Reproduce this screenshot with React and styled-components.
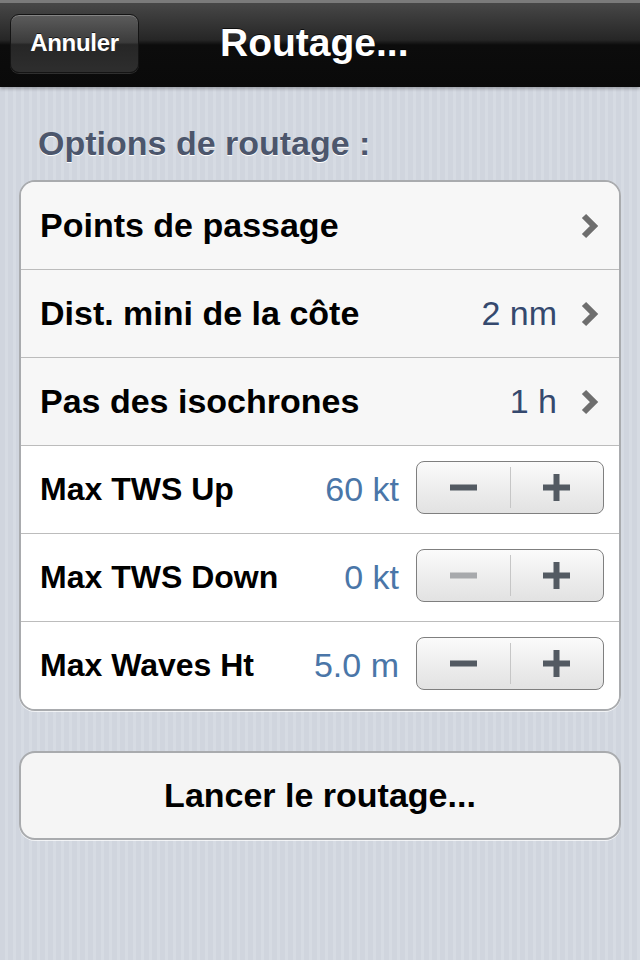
import React from 'react'
import styled, { createGlobalStyle } from 'styled-components'

const GlobalStyle = createGlobalStyle`
  html, body {
    margin: 0;
    padding: 0;
  }
  body {
    font-family: "Liberation Sans", Arial, sans-serif;
    background-color: #d3d8e1;
  }
`

const Screen = styled.div`
  width: 640px;
  height: 960px;
  display: flex;
  flex-direction: column;
  background-color: #d0d5de;
  background-image: repeating-linear-gradient(
    90deg,
    #d0d5de 0px,
    #d0d5de 5px,
    #d6dbe3 5px,
    #d6dbe3 8px
  );
  overflow: hidden;
`

const NavBar = styled.div`
  height: 87px;
  box-sizing: border-box;
  display: flex;
  align-items: center;
  padding: 0 10px;
  gap: 81px;
  border-top: 3px solid #7a7a7a;
  background: linear-gradient(
    to bottom,
    #474747 0%,
    #262626 44%,
    #0c0c0c 50%,
    #0a0a0a 100%
  );
  box-shadow: 0 2px 3px rgba(0, 0, 0, 0.25);
`

const NavButton = styled.button`
  width: 129px;
  height: 59px;
  margin-top: -4px;
  border-radius: 9px;
  border: 1px solid #141414;
  background: linear-gradient(
    to bottom,
    #5c5c5c 0%,
    #3b3b3b 48%,
    #262626 52%,
    #2e2e2e 100%
  );
  box-shadow: inset 0 1px 0 rgba(255, 255, 255, 0.25), 0 1px 0 rgba(255, 255, 255, 0.15);
  color: #fff;
  font-family: "Liberation Sans", Arial, sans-serif;
  font-weight: bold;
  font-size: 24px;
  letter-spacing: -0.3px;
  text-shadow: 0 -1px 0 rgba(0, 0, 0, 0.6);
  cursor: pointer;
`

const NavTitle = styled.h1`
  margin: -4px 0 0;
  color: #fff;
  font-size: 39px;
  font-weight: bold;
  text-shadow: 0 -1px 0 rgba(0, 0, 0, 0.7);
`

const Content = styled.div`
  display: flex;
  flex-direction: column;
  padding: 37px 19px 0;
`

const SectionTitle = styled.h2`
  margin: 0 0 17px 19px;
  font-size: 34px;
  line-height: 39px;
  font-weight: bold;
  color: #4c566c;
  text-shadow: 0 1px 0 #fff;
`

const Group = styled.div`
  display: flex;
  flex-direction: column;
  border: 2px solid #a9abae;
  border-radius: 16px;
  background: #f7f7f7;
  overflow: hidden;
  box-shadow: 0 1px 0 rgba(255, 255, 255, 0.7);
`

const Row = styled.div`
  height: 87px;
  display: flex;
  align-items: center;
  padding: 0 15px 0 19px;
  border-top: ${p => (p.first ? 'none' : '1px solid #bcbcbc')};
  background: ${p => (p.white ? '#ffffff' : '#f7f7f7')};
`

const Label = styled.span`
  flex: 1;
  font-size: ${p => (p.small ? '32px' : '34px')};
  font-weight: bold;
  color: #000;
`

const Value = styled.span`
  font-size: 34px;
  color: ${p => (p.accent ? '#4a76a8' : '#35496e')};
  margin-right: ${p => (p.accent ? '17px' : '24px')};
`

const Chevron = styled.svg`
  width: 18px;
  height: 26px;
  margin-right: 5px;
`

const Stepper = styled.div`
  width: 186px;
  height: 51px;
  margin-bottom: 5px;
  display: flex;
  align-items: stretch;
  border: 1px solid #7f7f7f;
  border-radius: 8px;
  background: linear-gradient(to bottom, #fbfbfb 0%, #eeeeee 50%, #e2e2e2 100%);
  overflow: hidden;
`

const StepButton = styled.button`
  flex: 1;
  display: flex;
  align-items: center;
  justify-content: center;
  border: none;
  border-left: ${p => (p.divider ? '1px solid #c6c6c6' : 'none')};
  margin: ${p => (p.divider ? '5px 0' : '0')};
  background: transparent;
  padding: 0;
  cursor: pointer;
`

const StepIcon = styled.svg`
  width: 27px;
  height: 27px;
`

const ActionButton = styled.button`
  margin-top: 40px;
  height: 89px;
  border: 2px solid #a9abae;
  border-radius: 16px;
  background: #f5f5f5;
  font-family: "Liberation Sans", Arial, sans-serif;
  font-size: 34px;
  font-weight: bold;
  color: #000;
  box-shadow: 0 1px 0 rgba(255, 255, 255, 0.7);
  cursor: pointer;
`

const ChevronIcon = () => (
  <Chevron viewBox="0 0 18 26">
    <path d="M3 3 L13 13 L3 23" fill="none" stroke="#6e6e6e" strokeWidth="6" strokeLinejoin="miter" />
  </Chevron>
)

const Minus = ({ disabled }) => (
  <StepIcon viewBox="0 0 27 27">
    <rect x="0" y="10.5" width="27" height="6" fill={disabled ? '#a7a9ac' : '#535a62'} />
  </StepIcon>
)

const Plus = () => (
  <StepIcon viewBox="0 0 27 27">
    <rect x="0" y="10.5" width="27" height="6" fill="#535a62" />
    <rect x="10.5" y="0" width="6" height="27" fill="#535a62" />
  </StepIcon>
)

const navRows = [
  { label: 'Points de passage', value: '' },
  { label: 'Dist. mini de la côte', value: '2 nm' },
  { label: 'Pas des isochrones', value: '1 h' },
]

const stepRows = [
  { label: 'Max TWS Up', value: '60 kt', minDisabled: false },
  { label: 'Max TWS Down', value: '0 kt', minDisabled: true },
  { label: 'Max Waves Ht', value: '5.0 m', minDisabled: false },
]

const App = () => {
  return (
    <>
      <GlobalStyle />
      <Screen>
        <NavBar>
          <NavButton>Annuler</NavButton>
          <NavTitle>Routage...</NavTitle>
        </NavBar>
        <Content>
          <SectionTitle>Options de routage :</SectionTitle>
          <Group>
            {navRows.map((row, i) => (
              <Row key={row.label} first={i === 0}>
                <Label>{row.label}</Label>
                {row.value && <Value>{row.value}</Value>}
                <ChevronIcon />
              </Row>
            ))}
            {stepRows.map(row => (
              <Row key={row.label} white>
                <Label small>{row.label}</Label>
                <Value accent>{row.value}</Value>
                <Stepper>
                  <StepButton>
                    <Minus disabled={row.minDisabled} />
                  </StepButton>
                  <StepButton divider>
                    <Plus />
                  </StepButton>
                </Stepper>
              </Row>
            ))}
          </Group>
          <ActionButton>Lancer le routage...</ActionButton>
        </Content>
      </Screen>
    </>
  )
}

export default App
